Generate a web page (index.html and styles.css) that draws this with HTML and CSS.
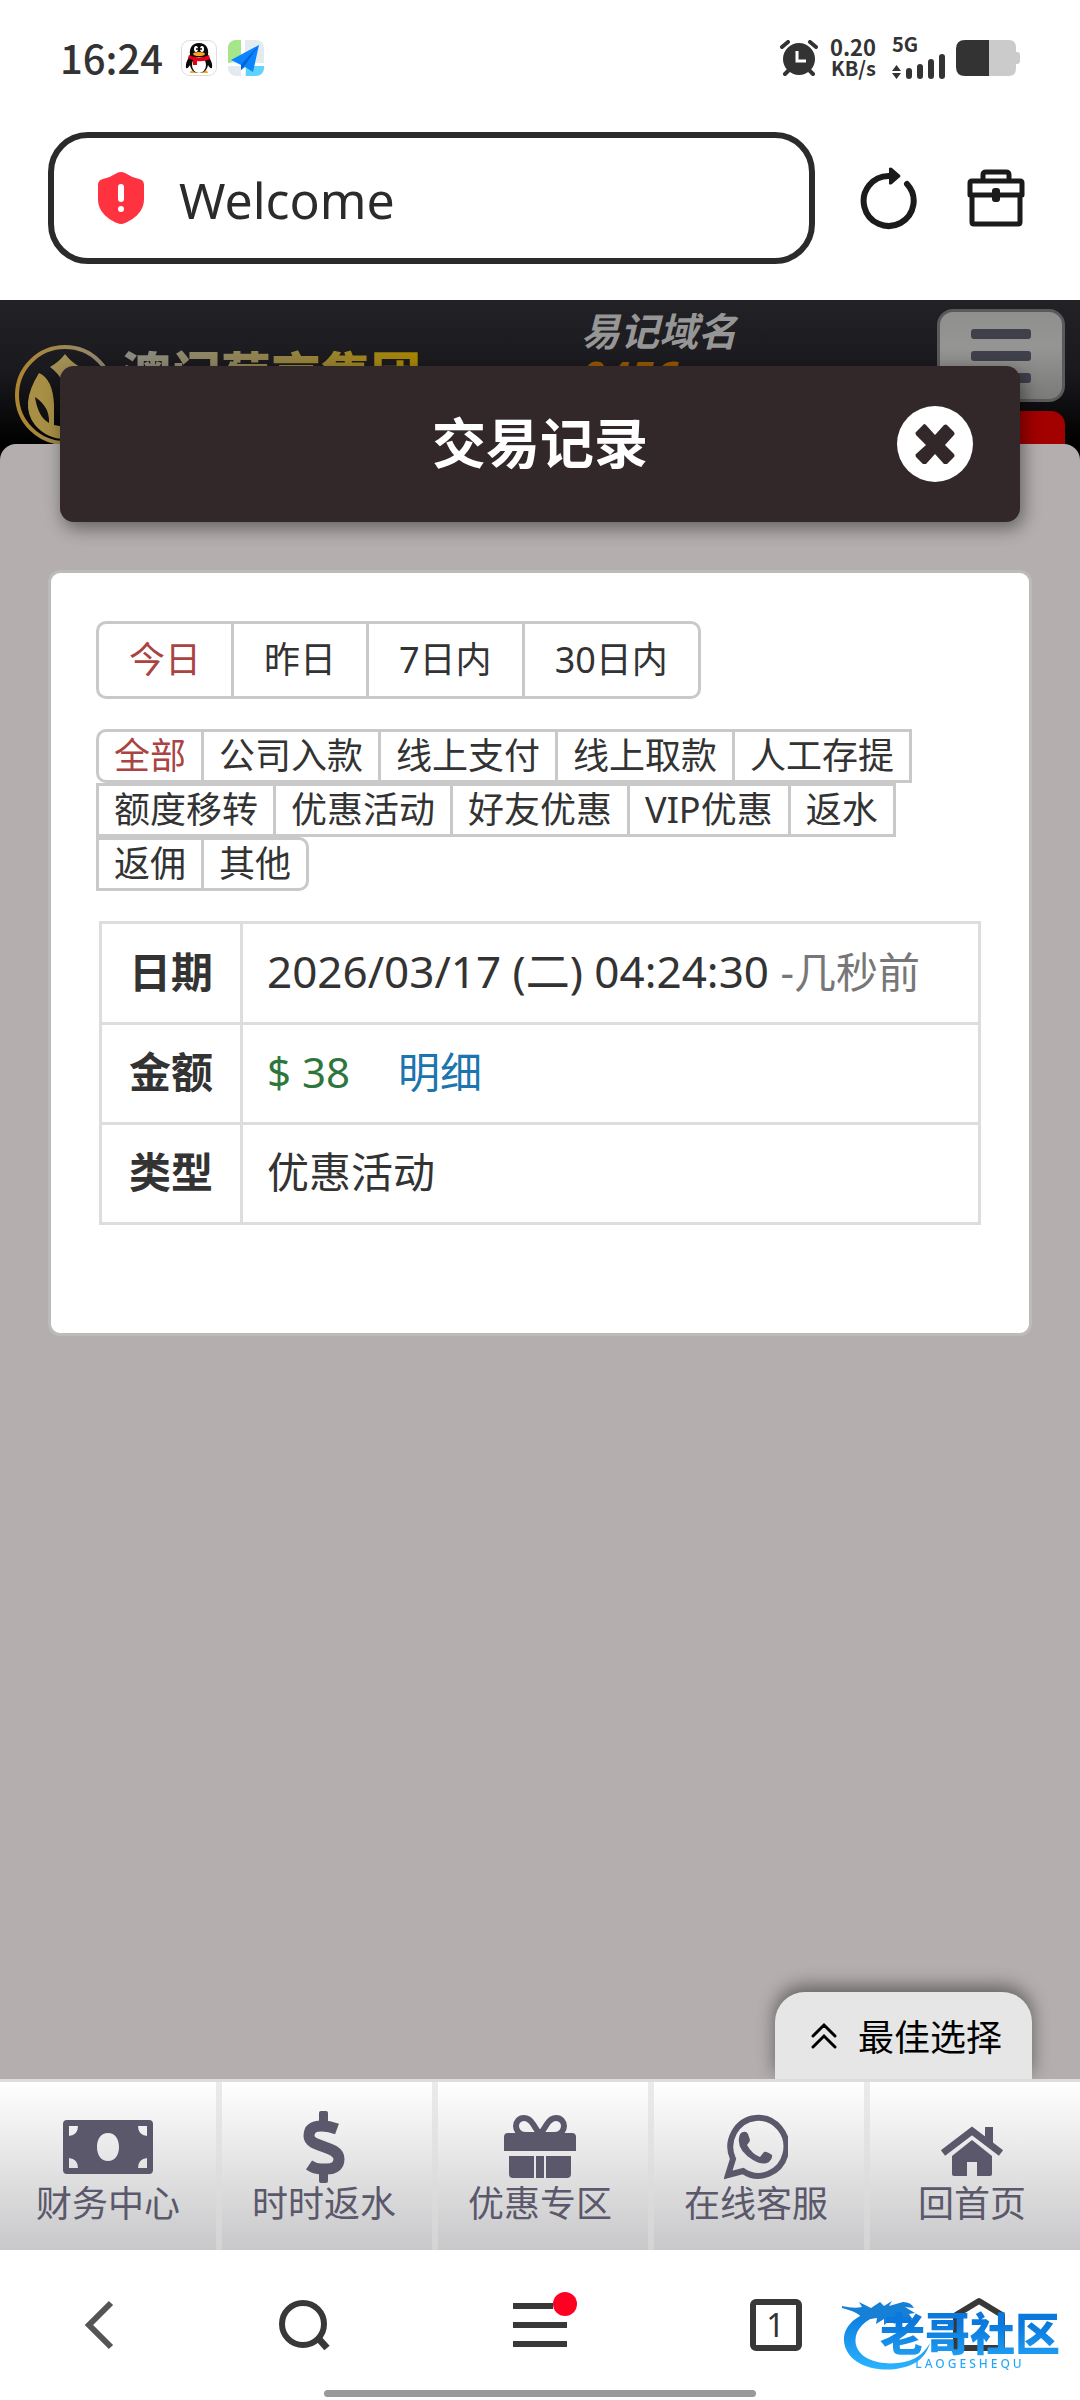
FILE: index.html
```html
<!DOCTYPE html>
<html lang="zh-CN">
<head>
    <meta charset="UTF-8" />
    <meta name="viewport" content="width=device-width, initial-scale=1" />
    <title>Welcome</title>
    <link rel="stylesheet" href="styles.css">
</head>
<body>
    <div class="status-bar">
        <span class="clock">16:24</span>
        <svg class="app-icon" viewBox="0 0 36 36">
            <rect x="0.5" y="0.5" width="35" height="35" rx="8" fill="#fff" stroke="#ddd"/>
            <path d="M9 33q0-3 5-3h8q5 0 5 3z" fill="#f5a623"/>
            <path d="M18 3c-7 0-10 5-9 12-1 3-5 7-4 13 1 1 3-1 4-3 1 6 5 8 9 8s8-2 9-8c1 2 3 4 4 3 1-6-3-10-4-13 1-7-2-12-9-12z" fill="#0a0a0a"/>
            <ellipse cx="18" cy="25" rx="7" ry="8" fill="#fff"/>
            <ellipse cx="15" cy="9" rx="2" ry="3" fill="#fff"/>
            <ellipse cx="21" cy="9" rx="2" ry="3" fill="#fff"/>
            <circle cx="16" cy="9" r="1" fill="#000"/>
            <circle cx="20" cy="9" r="1" fill="#000"/>
            <ellipse cx="18" cy="14" rx="6" ry="2" fill="#f5a623"/>
            <path d="M8 15q10 5 20 0l1 4q-6 3-13 2v4h-4v-5l-5-2z" fill="#e60012"/>
        </svg>
        <svg class="app-icon" viewBox="0 0 36 36">
            <clipPath id="map-clip"><rect width="36" height="36" rx="8"/></clipPath>
            <g clip-path="url(#map-clip)">
                <rect width="36" height="36" fill="#e4ebee"/>
                <path d="M0 0h13v16L0 24z" fill="#a5e68b"/>
                <path d="M18 26h18v10H18z" fill="#5fd3ff"/>
                <path d="M13 0h4v36h-4zM0 23h36v3H0z" fill="#fff"/>
                <path d="M31 5L3 20l10 5v5l4-3 8 5z" fill="#0a84ff"/>
                <path d="M31 5L13 25v5l4-5z" fill="#0061d5"/>
            </g>
        </svg>
        <span class="spacer"></span>
        <svg class="alarm" viewBox="0 0 38 36">
            <circle cx="19" cy="19" r="16" fill="#333"/>
            <path d="M2 7l6-5M36 7l-6-5M5 34l5-5M33 34l-5-5" stroke="#333" stroke-width="4" stroke-linecap="round"/>
            <path d="M17 11v10h9" fill="none" stroke="#fff" stroke-width="3"/>
        </svg>
        <div class="net-speed"><span class="speed">0.20</span><span class="unit">KB/s</span></div>
        <div class="signal">
            <span class="unit">5G</span>
            <svg viewBox="0 0 54 26" width="54" height="26">
                <path d="M0 18l4.500-6 4.500 6zM0 20l4.500 6 4.500-6z" fill="#333"/>
                <path d="M17 18v5M28 14v9M39 9v14M50 4v19" stroke="#333" stroke-width="6" stroke-linecap="round"/>
            </svg>
        </div>
        <svg class="battery" viewBox="0 0 64 36">
            <path d="M33 0h20q7 0 7 8v4h1q3 0 3 3v6q0 3-3 3h-1v4q0 8-7 8H33z" fill="#cbcbcb"/>
            <path d="M33 0H9Q0 0 0 9v18q0 9 9 9h24z" fill="#333"/>
        </svg>
    </div>

    <div class="address-row">
        <label class="address-bar">
            <svg width="46" height="52" viewBox="0 0 46 52">
                <path d="M23 0q2 0 4 1 6 4 14 6 5 1 5 6v14c0 14-12 21-19 24q-4 2-8 0C12 48 0 41 0 27V13q0-5 5-6 8-2 14-6 2-1 4-1z" fill="#ff323f"/>
                <path d="M23 15v12" stroke="#fff" stroke-width="6" stroke-linecap="round"/>
                <circle cx="23" cy="37" r="3" fill="#fff"/>
            </svg>
            <input type="text" value="Welcome" aria-label="地址" />
        </label>
        <button class="tool-btn" aria-label="刷新">
            <svg width="60" height="64" viewBox="0 0 60 64">
                <path d="M30 10A25 25 0 1 0 48 18" fill="none" stroke="#1b1b1b" stroke-width="6" stroke-linecap="round"/>
                <path d="M30 2q2-1 3 0l8 7q1 1 0 2l-8 7q-2 1-3 0z" fill="#1b1b1b"/>
            </svg>
        </button>
        <button class="tool-btn" aria-label="工具箱">
            <svg width="58" height="58" viewBox="0 0 58 58" fill="none" stroke="#1b1b1b" stroke-width="5" stroke-linejoin="round">
                <path d="M16 11V6q0-3 3-3h20q3 0 3 3v5M3 26V14q0-2 2-2h48q2 0 2 2v12zM5 26v27q0 2 2 2h44q2 0 2-2V26"/>
                <rect x="25" y="19" width="8" height="14" rx="3" fill="#1b1b1b" stroke="none"/>
            </svg>
        </button>
    </div>

    <div class="site">
        <header class="site-header">
            <div class="logo">
                <svg width="100" height="100" viewBox="0 0 100 100">
                    <circle cx="50" cy="50" r="48" fill="none" stroke="url(#gold)" stroke-width="4"/>
                    <defs>
                        <linearGradient id="gold">
                            <stop offset="0" stop-color="#ad8530"/>
                            <stop offset="1" stop-color="#8f8878"/>
                        </linearGradient>
                    </defs>
                    <path d="M50 9q6 8 15 13-9 6-8 20l-4 18q-1-26-18-38 9-5 15-13z" fill="#a39055"/>
                    <path d="M24 28Q4 60 20 80q12 14 30 14V82l-11-2V60Q38 34 24 28z" fill="#a88f45"/>
                    <path d="M20 52q3 20 14 26 1-16-14-26z" fill="#111"/>
                </svg>
                <span class="logo-text">澳门葡京集团</span>
            </div>
            <div class="domain">易记域名<span class="domain-code">0456</span></div>
            <div class="header-side">
                <button class="menu-btn" aria-label="菜单"><i></i><i></i><i></i></button>
                <div class="red-btn"></div>
            </div>
        </header>

        <main class="page">
            <div class="modal-title">
                <h1>交易记录</h1>
                <button class="close-btn" aria-label="关闭">
                    <svg width="40" height="40" viewBox="0 0 40 40">
                        <path d="M9 0q1 0 2 1l9 10 9-10q2-1 3 0l7 7q1 2 0 3l-9 10 9 9q1 2 0 3l-7 7q-2 1-3 0l-9-10-9 10q-2 1-3 0l-7-7q-1-2 0-3l10-9L1 11q-1-2 0-3l7-7z" fill="#322729"/>
                    </svg>
                </button>
            </div>

            <section class="card">
                <div class="tabs date-tabs">
                    <button class="active">今日</button>
                    <button>昨日</button>
                    <button>7日内</button>
                    <button>30日内</button>
                </div>
                <div class="tabs type-tabs">
                    <button class="active">全部</button>
                    <button>公司入款</button>
                    <button>线上支付</button>
                    <button>线上取款</button>
                    <button>人工存提</button>
                    <button>额度移转</button>
                    <button>优惠活动</button>
                    <button>好友优惠</button>
                    <button>VIP优惠</button>
                    <button>返水</button>
                    <button>返佣</button>
                    <button>其他</button>
                </div>
                <table class="record">
                    <tr>
                        <th scope="row">日期</th>
                        <td><span class="date">2026/03/17 (二) 04:24:30 </span><span class="ago">-几秒前</span></td>
                    </tr>
                    <tr>
                        <th scope="row">金额</th>
                        <td><span class="amount">$ 38</span><a href="#" class="detail">明细</a></td>
                    </tr>
                    <tr>
                        <th scope="row">类型</th>
                        <td>优惠活动</td>
                    </tr>
                </table>
            </section>

            <button class="best-choice">
                <svg width="28" height="28" viewBox="0 0 28 28" fill="none" stroke="#000" stroke-width="3" stroke-linecap="round">
                    <path d="M3 14L14 3l11 11M3 25l11-11 11 11"/>
                </svg>
                最佳选择
            </button>
        </main>

        <nav class="site-nav">
            <a href="#">
                <svg width="90" height="72" viewBox="0 0 90 72">
                    <path fill-rule="evenodd" d="M4 9h82q4 0 4 4v46q0 4-4 4H4q-4 0-4-4V13q0-4 4-4zM45 22c-7 0-11 6-11 14s4 14 11 14 11-6 11-14-4-14-11-14zM6 15v10q9-1 9-10zM84 15v10q-9-1-9-10zM6 57V47q9 1 9 10zM84 57V47q-9 1-9 10z"/>
                </svg>
                财务中心
            </a>
            <a href="#">
                <svg width="42" height="72" viewBox="0 0 42 72">
                    <path d="M34 18Q26 15 19 15C9 15 6 19 6 25c0 12 30 9 30 23 0 7-5 10-12 10H18Q12 58 6 54" fill="none" stroke="#5a586a" stroke-width="11"/>
                    <rect x="16" y="0" width="9" height="13" rx="2"/>
                    <rect x="16" y="59" width="9" height="13" rx="2"/>
                </svg>
                时时返水
            </a>
            <a href="#">
                <svg width="72" height="72" viewBox="0 0 72 72">
                    <path d="M36 24L29 13Q25 7 20 7c-5 0-8 4-8 8s3 9 9 9zM36 24l7-11q4-6 9-6c5 0 8 4 8 8s-3 9-9 9z" fill="none" stroke="#5a586a" stroke-width="6"/>
                    <path d="M4 22h24v18H0V26q0-4 4-4zM44 22h24q4 0 4 4v14H44zM28 22h16v18H28zM5 45h26v22H9q-4 0-4-4zM41 45h26v18q0 4-4 4H41zM31 45h10v22H31z"/>
                    <path d="M31 45v22M41 45v22" stroke="#e5e5e5" stroke-width="2"/>
                </svg>
                优惠专区
            </a>
            <a href="#">
                <svg width="64" height="72" viewBox="0 0 64 72">
                    <path d="M4 64l5-16A28 29 0 1 1 19 60z" fill="none" stroke="#5a586a" stroke-width="6"/>
                    <path d="M17 22q5-3 7 1l2 6q0 2-3 5 5 9 13 12l4-5q2-1 8 3 1 3-3 7-6 4-16-2Q13 39 15 27q0-3 2-5z"/>
                </svg>
                在线客服
            </a>
            <a href="#">
                <svg width="64" height="72" viewBox="0 0 64 72">
                    <path d="M3 42L32 20l29 22" fill="none" stroke="#5a586a" stroke-width="7"/>
                    <path d="M45 16h8v18l-8-6zM32 29l20 16v18q0 2-2 2H37V51H27v14H14q-2 0-2-2V45z"/>
                </svg>
                回首页
            </a>
        </nav>
    </div>

    <div class="browser-nav">
        <button aria-label="后退">
            <svg width="60" height="60" viewBox="0 0 60 60" fill="none" stroke="#555" stroke-width="6">
                <path d="M40 8L18 30l22 22"/>
            </svg>
        </button>
        <button aria-label="搜索">
            <svg width="60" height="60" viewBox="0 0 60 60" fill="none" stroke="#383838" stroke-width="6">
                <circle cx="28" cy="29" r="21"/>
                <path d="M43 43l9 10" stroke-width="7"/>
            </svg>
        </button>
        <button class="nav-menu" aria-label="菜单">
            <svg width="60" height="60" viewBox="0 0 60 60" fill="none" stroke="#383838" stroke-width="6">
                <path d="M3 11h40M3 30h54M3 49h54"/>
            </svg>
            <span class="dot"></span>
        </button>
        <button aria-label="标签页"><span class="tab-count">1</span></button>
        <button aria-label="主页">
            <svg width="60" height="60" viewBox="0 0 60 60" fill="none" stroke="#383838" stroke-width="6" stroke-linejoin="round">
                <path d="M7 20L30 6l23 14v33H7z"/>
            </svg>
        </button>
        <div class="home-indicator"></div>

        <div class="watermark">
            <svg width="96" height="80" viewBox="0 0 96 80">
                <defs>
                    <linearGradient id="blue" x2="0" y2="1">
                        <stop offset="0" stop-color="#0a78dc"/>
                        <stop offset="1" stop-color="#2bb4ff"/>
                    </linearGradient>
                </defs>
                <path d="M36 15C8 20-3 38 4 54c6 15 28 23 50 20 20-3 30-12 34-26-6 10-14 18-32 20-20 2-38-4-42-18-3-13 7-25 24-30z" fill="url(#blue)"/>
                <path d="M0 11q12 3 20 1l-3-5 12 6 9-6 4 4 8-5-3 5 14-4q8 0 11 6l-9-1 10 6-6 1 4 6-11-3-8 7-2-5-8 6v-6l-8 5 1-6-14 2q-3-9-31-14z" fill="#167fd6"/>
            </svg>
            <div class="watermark-text">老哥社区<small>LAOGESHEQU</small></div>
        </div>
    </div>
</body>
</html>
```
FILE: styles.css
```css
* {
    box-sizing: border-box;
}
body {
    margin: 0;
    min-height: 100vh;
    display: flex;
    flex-direction: column;
    background: #fff;
    color: #333;
    font-family: "Noto Sans", "Noto Sans CJK SC", sans-serif;
}
button {
    font-family: inherit;
    color: inherit;
    background: none;
    border: none;
    padding: 0;
    cursor: pointer;
}
a {
    text-decoration: none;
}
svg {
    display: block;
    flex-shrink: 0;
}

/* phone status bar */
.status-bar {
    display: flex;
    align-items: center;
    height: 116px;
    padding: 0 60px;
    font-family: "Noto Sans CJK SC", sans-serif;
}
.clock {
    font-size: 40px;
    font-weight: 500;
    line-height: 52px;
    margin: 0 18px 3px 0;
}
.app-icon {
    width: 36px;
    height: 36px;
    margin-right: 11px;
}
.spacer {
    flex: 1;
}
.alarm {
    width: 38px;
    height: 36px;
}
.net-speed {
    display: flex;
    flex-direction: column;
    align-items: flex-end;
    margin: 0 16px 3px 12px;
    font-weight: 700;
}
.speed {
    font-size: 22px;
    line-height: 22px;
}
.unit {
    font-size: 20px;
    line-height: 22px;
    font-weight: 700;
}
.signal {
    width: 54px;
    margin: 0 10px 3px 0;
}
.signal .unit {
    display: block;
    line-height: 18px;
}
.battery {
    width: 64px;
    height: 36px;
}

/* address bar */
.address-row {
    display: flex;
    align-items: center;
    gap: 48px;
    padding: 16px 55px 36px 48px;
}
.address-bar {
    flex: 1;
    display: flex;
    align-items: center;
    gap: 35px;
    height: 132px;
    min-width: 0;
    margin-right: -4px;
    padding: 0 44px;
    border: 6px solid #2b2b2b;
    border-radius: 40px;
}
.address-bar input {
    flex: 1;
    min-width: 0;
    border: none;
    outline: none;
    padding: 3px 0 0;
    background: none;
    color: #2b2b2b;
    font-family: inherit;
    font-size: 50px;
    line-height: 72px;
}

/* site header, dimmed behind the dialog */
.site {
    flex: 1;
    display: flex;
    flex-direction: column;
    background: #000;
}
.site-header {
    display: flex;
    height: 144px;
    padding: 9px 15px 0;
    overflow: hidden;
    background: linear-gradient(#222126, #1a191d 50%, #000);
}
.logo {
    display: flex;
    flex: 1;
    gap: 6px;
    padding-top: 36px;
}
.logo-text {
    font-size: 50px;
    font-weight: 900;
    line-height: 60px;
    color: transparent;
    background: linear-gradient(90deg, #8c8c84, #91824c 50%, #a88600);
    background-clip: text;
    -webkit-background-clip: text;
}
.domain {
    width: 356px;
    color: #969696;
    font-size: 39px;
    font-weight: 700;
    font-style: italic;
    line-height: 44px;
}
.domain-code {
    display: block;
    color: #955600;
    font-size: 44px;
    line-height: 48px;
}
.header-side {
    width: 128px;
}
.menu-btn {
    display: flex;
    flex-direction: column;
    align-items: center;
    justify-content: center;
    gap: 12px;
    width: 100%;
    height: 93px;
    border: 3px solid #5a5a5c;
    border-radius: 16px;
    background: linear-gradient(#8f8f8e, #959594 40%, #7a7a79);
}
.menu-btn i {
    width: 60px;
    height: 10px;
    border-radius: 3px;
    background: #40404b;
}
.red-btn {
    height: 60px;
    margin-top: 9px;
    border-radius: 14px;
    background: #a30000;
}

/* transaction records */
.page {
    flex: 1;
    display: flex;
    flex-direction: column;
    padding: 0 48px;
    border-radius: 16px 16px 0 0;
    background: #b4aeae;
}
.modal-title {
    position: relative;
    display: flex;
    align-items: center;
    justify-content: center;
    height: 156px;
    margin: -78px 12px 48px;
    border-radius: 14px;
    background: #322729;
    box-shadow: 3px 6px 18px rgba(0, 0, 0, 0.45);
}
.modal-title h1 {
    margin: 0;
    padding-bottom: 2px;
    color: #fff;
    font-size: 54px;
    font-weight: 700;
    line-height: 72px;
}
.close-btn {
    position: absolute;
    right: 47px;
    width: 76px;
    height: 76px;
    display: flex;
    align-items: center;
    justify-content: center;
    border-radius: 50%;
    background: #fff;
}
.card {
    padding: 48px 45px 108px;
    border: 3px solid #bbb;
    border-radius: 12px;
    background: #fff;
}
.tabs {
    display: flex;
    flex-wrap: wrap;
    padding-left: 3px;
    margin-bottom: 30px;
}
.tabs button {
    margin-left: -3px;
    padding: 0 15px;
    border: 3px solid #c9c9c9;
    font-size: 36px;
    line-height: 48px;
}
.date-tabs button {
    padding: 0 30px;
    line-height: 72px;
}
.tabs button:first-child {
    border-radius: 10px 0 0 10px;
}
.tabs button:last-child {
    border-radius: 0 10px 10px 0;
}
.tabs .active {
    color: #a94442;
}
.record {
    width: 882px;
    max-width: 100%;
    margin: 0 auto;
    border-collapse: collapse;
    font-size: 42px;
    line-height: 60px;
}
.record th,
.record td {
    height: 100px;
    padding: 17px 24px 20px;
    border: 3px solid #ddd;
    text-align: left;
    white-space: nowrap;
}
.record th {
    width: 141px;
    padding-left: 27px;
    padding-right: 27px;
}
.date {
    font-size: 44px;
}
.ago {
    color: #777;
}
.amount {
    margin-right: 48px;
    color: #2d773c;
}
.detail {
    color: #1b75ae;
}
.best-choice {
    align-self: flex-end;
    display: flex;
    align-items: center;
    gap: 20px;
    height: 87px;
    margin-top: auto;
    padding: 0 30px 0 35px;
    border-radius: 30px 30px 0 0;
    background: #e6e6e6;
    color: #000;
    font-size: 36px;
    box-shadow: 0 -6px 18px rgba(0, 0, 0, 0.45);
}
.site-nav {
    position: relative;
    display: flex;
    height: 171px;
    border-top: 3px solid #ddd;
    background: linear-gradient(#fff, #c8c8ca);
}
.site-nav a {
    flex: 1;
    display: flex;
    flex-direction: column;
    align-items: center;
    padding-top: 29px;
    color: #5a586a;
    fill: #5a586a;
    font-size: 36px;
    line-height: 42px;
}
.site-nav a + a {
    box-shadow: inset 6px 0 rgba(220, 220, 220, 0.6);
}

/* browser toolbar */
.browser-nav {
    position: relative;
    display: flex;
    align-items: center;
    justify-content: space-between;
    height: 150px;
    padding: 0 71px;
}
.browser-nav button {
    position: relative;
    width: 60px;
    height: 60px;
}
.browser-nav .nav-menu {
    margin: 0 32px;
}
.dot {
    position: absolute;
    top: -3px;
    right: -7px;
    width: 24px;
    height: 24px;
    border-radius: 50%;
    background: #ff0022;
}
.tab-count {
    display: block;
    width: 52px;
    height: 52px;
    margin: 0 auto;
    border: 6px solid #383838;
    border-radius: 6px;
    font-size: 32px;
    line-height: 40px;
}
.home-indicator {
    position: absolute;
    left: 30%;
    right: 30%;
    bottom: 3px;
    height: 7px;
    border-radius: 4px;
    background: #999;
}
.watermark {
    position: absolute;
    right: 20px;
    bottom: 25px;
    display: flex;
    pointer-events: none;
}
.watermark-text {
    margin: 16px 0 0 -58px;
    font-size: 45px;
    font-weight: 900;
    line-height: 46px;
    color: transparent;
    background: linear-gradient(#0a78dc 20%, #2bb4ff);
    background-clip: text;
    -webkit-background-clip: text;
}
.watermark-text small {
    display: block;
    font-size: 12px;
    font-weight: 500;
    line-height: 14px;
    letter-spacing: 3px;
    text-align: center;
}
```
